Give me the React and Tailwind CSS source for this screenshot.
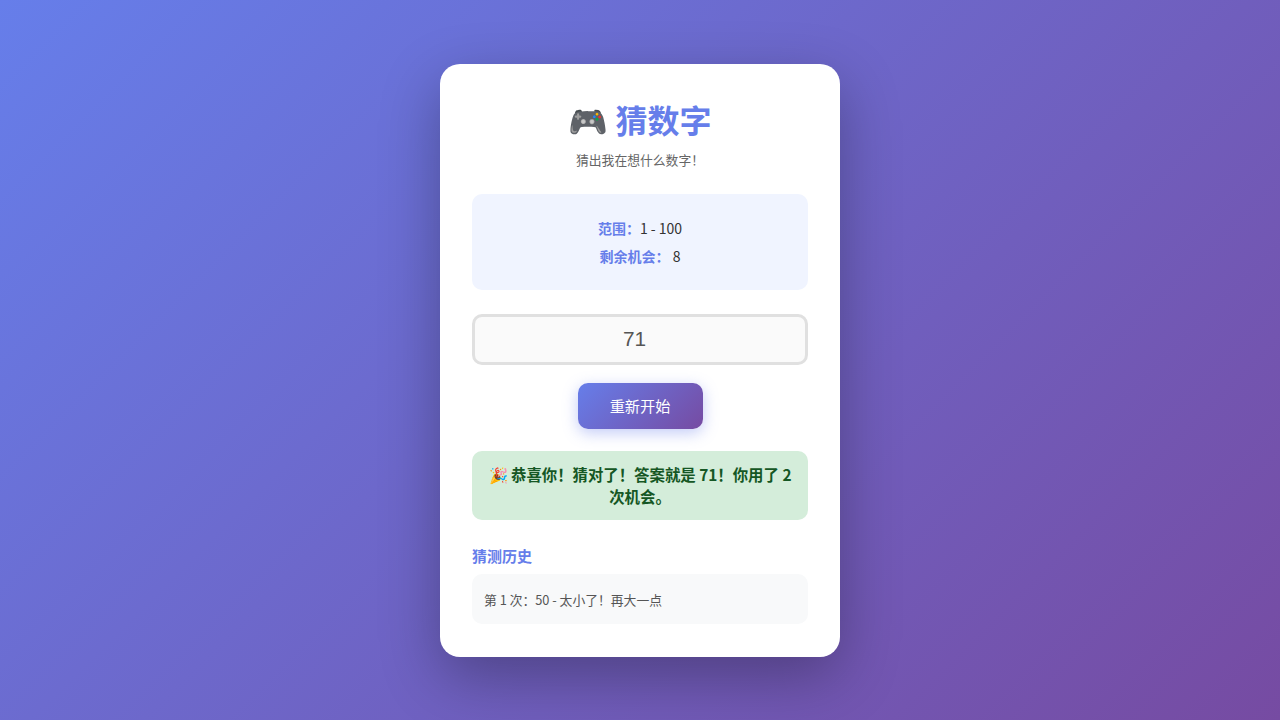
export default function App() {
  return (
    <div className="w-full h-[720px] overflow-hidden flex items-center justify-center bg-[linear-gradient(135deg,#667eea_0%,#764ba2_100%)] font-['Noto_Sans_CJK_SC','Noto_Sans',sans-serif]">
      <div className="w-[400px] bg-white rounded-[20px] pt-8 px-8 pb-[33px] shadow-[0_20px_60px_rgba(0,0,0,0.3)] text-center">
        <h1 className="text-[32px] font-bold leading-[46px] text-[#667eea] mb-2">🎮 猜数字</h1>
        <p className="text-[12.8px] leading-[20px] text-[#666666] mb-6">猜出我在想什么数字！</p>
        <div className="bg-[#f0f4ff] rounded-[10px] py-5 px-5 mb-6 text-sm text-[#333333]">
          <div className="h-7 leading-7"><span className="font-bold text-[#667eea]">范围：</span>1 - 100</div>
          <div className="h-7 leading-7"><span className="font-bold text-[#667eea]">剩余机会：</span> <span>8</span></div>
        </div>
        <input type="number" readOnly value="71" className="block w-full h-[51px] border-[3px] border-[#e0e0e0] rounded-[10px] bg-[#fafafa] text-center text-[20.8px] text-[#555555] font-['Liberation_Sans',sans-serif] pl-4 pr-3 mb-[18px] outline-none" />
        <button className="block mx-auto w-[125px] h-[46px] rounded-[10px] text-white text-[15.2px] bg-[linear-gradient(135deg,#667eea_0%,#764ba2_100%)] shadow-[0_4px_15px_rgba(102,126,234,0.4)] mb-[22px]">重新开始</button>
        <div className="bg-[#d4edda] text-[#155724] font-bold text-[15.4px] leading-[22.5px] rounded-[10px] px-4 py-3 mb-6">🎉 恭喜你！猜对了！答案就是 71！你用了 2 次机会。</div>
        <h3 className="text-left text-[15px] font-bold leading-[24px] text-[#667eea] mb-[6px]">猜测历史</h3>
        <div className="text-left bg-[#f8f9fa] rounded-[10px] px-3 pt-[15px] pb-[13px] text-[12.8px] leading-[22px] text-[#555555]">第 1 次：50 - 太小了！再大一点</div>
      </div>
    </div>
  );
}
